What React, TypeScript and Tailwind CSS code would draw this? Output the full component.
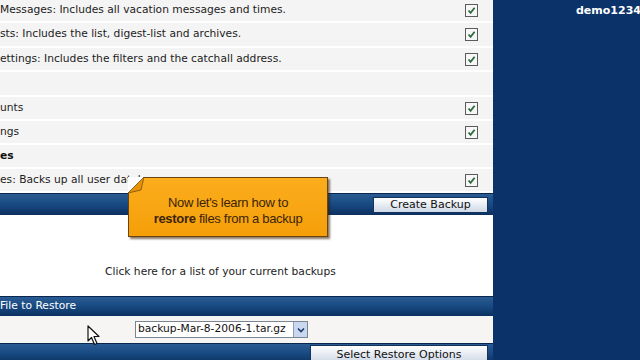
import React from 'react'

const Check: React.FC = () => (
  <div className="w-[13px] h-[13px] border border-[#5b5b5b] bg-[#f7f7f7] flex items-center justify-center shrink-0">
    <svg width="9" height="9" viewBox="0 0 9 9">
      <path d="M1.5 4.5 L3.6 6.8 L7.6 1.8" fill="none" stroke="#2f6a3c" strokeWidth="1.8" />
    </svg>
  </div>
)

const Row: React.FC<{ text?: string; bold?: boolean; check?: boolean; h: string }> = ({ text, bold, check, h }) => (
  <div className={`${h} flex items-center justify-between bg-[#f4f4f4] border-b-2 border-white pr-[15px] shrink-0`}>
    <span className={bold ? 'font-bold text-[#111]' : 'text-[#1c1c1c]'}>{text}</span>
    {check && <Check />}
  </div>
)

const barCls = 'bg-gradient-to-b from-[#2a5c93] via-[#184a82] to-[#0c3060] border-t border-[#0a2750]'
const btnCls =
  'bg-gradient-to-b from-white to-[#cfd9e6] border border-[#14325c] text-[11px] text-[#111] leading-none flex items-center justify-center'

export default function App() {
  return (
    <div className="w-[640px] h-[360px] flex overflow-hidden bg-[#0b3269] relative" style={{ fontFamily: '"DejaVu Sans", Verdana, sans-serif' }}>
      {/* main panel */}
      <div className="w-[493px] h-full bg-white flex flex-col text-[10.7px] shrink-0">
        <Row h="h-[23px]" text="Messages: Includes all vacation messages and times." check />
        <Row h="h-[25px]" text="sts: Includes the list, digest-list and archives." check />
        <Row h="h-[24px]" text="ettings: Includes the filters and the catchall address." check />
        <Row h="h-[25px]" />
        <Row h="h-[24px]" text="unts" check />
        <Row h="h-[24px]" text="ngs" check />
        <Row h="h-[24px]" text="es" bold />
        <Row h="h-[24px]" text="es: Backs up all user databases" check />

        <div className={`h-[22px] ${barCls} flex items-center justify-end pr-[5px] shrink-0`}>
          <div className={`${btnCls} w-[115px] h-[16px]`}>Create Backup</div>
        </div>

        <div className="h-[81px] flex items-end pl-[105px] pb-[16px] text-[#222] shrink-0">
          Click here for a list of your current backups
        </div>

        <div className={`h-[20px] ${barCls} flex items-center text-white shrink-0`}>File to Restore</div>

        <div className="h-[27px] bg-[#f7f5f3] flex items-center pl-[135px] shrink-0">
          <div className="h-[17px] w-[173px] border border-[#7a8594] bg-white flex items-center">
            <span className="flex-1 pl-[2px] text-[#111] whitespace-nowrap">backup-Mar-8-2006-1.tar.gz</span>
            <div className="w-[14px] h-[15px] bg-[#c9d8ee] border-l border-[#8aa0c0] flex items-center justify-center">
              <svg width="8" height="6" viewBox="0 0 8 6">
                <path d="M1 1.5 L4 4.5 L7 1.5" fill="none" stroke="#1e3a6a" strokeWidth="1.6" />
              </svg>
            </div>
          </div>
        </div>

        <div className={`flex-1 ${barCls} flex items-start justify-end pr-[5px] pt-[1px]`}>
          <div className={`${btnCls} w-[178px] h-[18px]`}>Select Restore Options</div>
        </div>
      </div>

      {/* right nav */}
      <div className="flex-1 pl-[83px] pt-[3px] text-white font-bold text-[11px] whitespace-nowrap">demo1234</div>

      {/* tooltip */}
      <div className="absolute left-[128px] top-[177px] w-[200px] h-[60px] bg-gradient-to-b from-[#fbad1c] to-[#f59f08] border border-[#6a4512] shadow-[2px_2px_2px_rgba(60,30,0,0.6)] flex flex-col items-center justify-center text-[13px] leading-[16px] text-[#3b2408] tracking-[-0.3px]" style={{ fontFamily: '"Liberation Sans", Arial, sans-serif' }}>
        <svg className="absolute -left-px -top-px" width="16" height="16" viewBox="0 0 16 16">
          <path d="M0 0 L16 0 L0 16 Z" fill="#ffffff" />
          <path d="M16 0 L0 16 L13 13 Z" fill="#e59406" stroke="#7a4c10" strokeWidth="0.8" />
        </svg>
        <div className="pt-[7px]">Now let's learn how to</div>
        <div>
          <span className="font-bold">restore</span> files from a backup
        </div>
      </div>

      {/* cursor */}
      <svg className="absolute left-[87px] top-[325px]" width="14" height="21" viewBox="0 0 14 21">
        <path d="M1 1 L1 16 L4.5 12.5 L7.5 19.5 L10 18.5 L7 11.5 L12 11.5 Z" fill="#ffffff" stroke="#111" strokeWidth="1.2" strokeLinejoin="round" />
      </svg>
    </div>
  )
}
